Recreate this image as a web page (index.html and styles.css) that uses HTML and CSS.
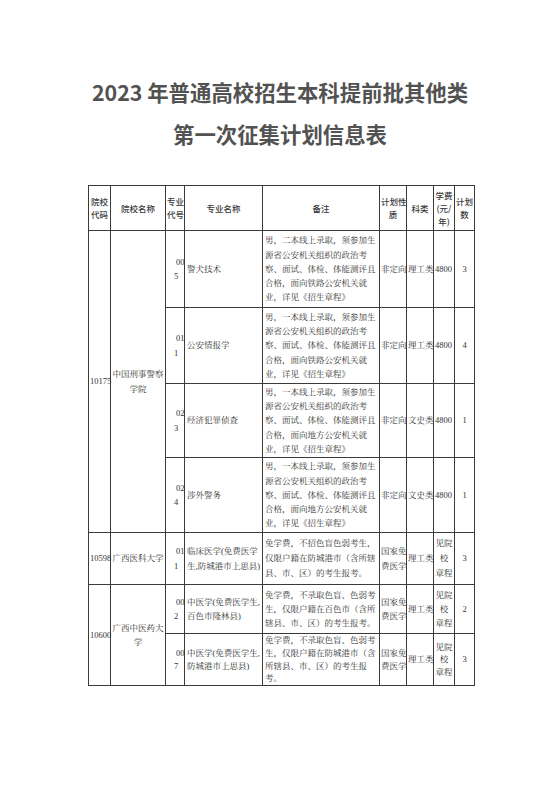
FILE: index.html
```html
<!DOCTYPE html>
<html lang="zh-CN">
<head>
<meta charset="utf-8">
<link rel="stylesheet" href="styles.css">
</head>
<body>
<div class="page">
  <h1 class="title"><span class="tl">2023 年普通高校招生本科提前批其他类</span><span class="tl">第一次征集计划信息表</span></h1>
  <table class="plan">
    <colgroup>
      <col class="w1"><col class="w2"><col class="w3"><col class="w4"><col class="w5"><col class="w6"><col class="w7"><col class="w8"><col class="w9">
    </colgroup>
    <thead>
      <tr class="hd">
        <th>院校<br>代码</th>
        <th>院校名称</th>
        <th>专业<br>代号</th>
        <th>专业名称</th>
        <th>备注</th>
        <th>计划性<br>质</th>
        <th>科类</th>
        <th>学费<br>(元/<br>年)</th>
        <th>计划<br>数</th>
      </tr>
    </thead>
    <tbody>
      <tr class="r1">
        <td rowspan="4" class="code">10175</td>
        <td rowspan="4" class="uni">中国刑事警察<br>学院</td>
        <td class="mc"><span class="l1">00</span><br>5</td>
        <td class="mn">警犬技术</td>
        <td class="rm">男，二本线上录取，须参加生<br>源省公安机关组织的政治考<br>察、面试、体检、体能测评且<br>合格，面向铁路公安机关就<br>业，详见《招生章程》</td>
        <td class="ctr">非定向</td>
        <td class="ctr">理工类</td>
        <td class="fee">4800</td>
        <td class="ctr">3</td>
      </tr>
      <tr class="r2">
        <td class="mc"><span class="l1">01</span><br>1</td>
        <td class="mn">公安情报学</td>
        <td class="rm">男，一本线上录取，须参加生<br>源省公安机关组织的政治考<br>察、面试、体检、体能测评且<br>合格，面向铁路公安机关就<br>业，详见《招生章程》</td>
        <td class="ctr">非定向</td>
        <td class="ctr">理工类</td>
        <td class="fee">4800</td>
        <td class="ctr">4</td>
      </tr>
      <tr class="r3">
        <td class="mc"><span class="l1">02</span><br>3</td>
        <td class="mn">经济犯罪侦查</td>
        <td class="rm">男，一本线上录取，须参加生<br>源省公安机关组织的政治考<br>察、面试、体检、体能测评且<br>合格，面向地方公安机关就<br>业，详见《招生章程》</td>
        <td class="ctr">非定向</td>
        <td class="ctr">文史类</td>
        <td class="fee">4800</td>
        <td class="ctr">1</td>
      </tr>
      <tr class="r4">
        <td class="mc"><span class="l1">02</span><br>4</td>
        <td class="mn">涉外警务</td>
        <td class="rm">男，一本线上录取，须参加生<br>源省公安机关组织的政治考<br>察、面试、体检、体能测评且<br>合格，面向地方公安机关就<br>业，详见《招生章程》</td>
        <td class="ctr">非定向</td>
        <td class="ctr">文史类</td>
        <td class="fee">4800</td>
        <td class="ctr">1</td>
      </tr>
      <tr class="r5">
        <td class="code">10598</td>
        <td class="uni">广西医科大学</td>
        <td class="mc"><span class="l1">01</span><br>1</td>
        <td class="mn">临床医学(免费医学<br>生,防城港市上思县)</td>
        <td class="rm">免学费，不招色盲色弱考生，<br>仅限户籍在防城港市（含所辖<br>县、市、区）的考生报考。</td>
        <td class="ctr">国家免<br>费医学</td>
        <td class="ctr">理工类</td>
        <td class="ctr">见院<br>校<br>章程</td>
        <td class="ctr">3</td>
      </tr>
      <tr class="r6">
        <td rowspan="2" class="code">10600</td>
        <td rowspan="2" class="uni">广西中医药大<br>学</td>
        <td class="mc"><span class="l1">00</span><br>2</td>
        <td class="mn">中医学(免费医学生,<br>百色市隆林县)</td>
        <td class="rm">免学费，不录取色盲、色弱考<br>生，仅限户籍在百色市（含所<br>辖县、市、区）的考生报考。</td>
        <td class="ctr">国家免<br>费医学</td>
        <td class="ctr">理工类</td>
        <td class="ctr">见院<br>校<br>章程</td>
        <td class="ctr">2</td>
      </tr>
      <tr class="r7">
        <td class="mc"><span class="l1">00</span><br>7</td>
        <td class="mn">中医学(免费医学生,<br>防城港市上思县)</td>
        <td class="rm">免学费，不录取色盲、色弱考<br>生，仅限户籍在防城港市（含<br>所辖县、市、区）的考生报<br>考。</td>
        <td class="ctr">国家免<br>费医学</td>
        <td class="ctr">理工类</td>
        <td class="ctr">见院<br>校<br>章程</td>
        <td class="ctr">3</td>
      </tr>
    </tbody>
  </table>
</div>
</body>
</html>
```

FILE: styles.css
```css
html, body {
  margin: 0;
  padding: 0;
  background: #ffffff;
}

.page {
  width: 560px;
  padding-top: 71px;
}

.title {
  margin: 0;
  font-family: "Noto Sans CJK SC", "Noto Sans", sans-serif;
  font-weight: 700;
  font-size: 21.4px;
  line-height: 42px;
  color: #525252;
  text-align: center;
}

.tl {
  display: block;
}

.plan {
  margin: 30px 0 0 88px;
  border-collapse: collapse;
  table-layout: fixed;
  width: 386px;
  color: #333333;
  font-family: "Liberation Serif", "Noto Serif CJK SC", "Noto Sans CJK SC", serif;
  font-size: 8.5px;
}

.w1 { width: 22px; }
.w2 { width: 55px; }
.w3 { width: 19px; }
.w4 { width: 78px; }
.w5 { width: 117px; }
.w6 { width: 27px; }
.w7 { width: 27px; }
.w8 { width: 21px; }
.w9 { width: 20px; }

.plan th,
.plan td {
  border: 1px solid #3a3a3a;
  padding: 0 1px;
  white-space: nowrap;
  overflow: visible;
  vertical-align: middle;
}

.plan th {
  font-family: "Noto Sans CJK SC", "Noto Sans", sans-serif;
  font-weight: 500;
  font-size: 8.5px;
  line-height: 13px;
  text-align: center;
  color: #3a3a3a;
}

.hd { height: 45px; }

.plan td { line-height: 14.3px; }

.r1 { height: 77px; }
.r2 { height: 76px; }
.r3 { height: 74px; }
.r4 { height: 75px; }
.r5 { height: 52px; }
.r6 { height: 49px; }
.r7 { height: 52px; }

.r5 td { line-height: 15px; }
.r6 td { line-height: 14px; }
.r7 td { line-height: 12.6px; }

.code {
  text-align: left;
  padding-left: 1px;
}

.uni {
  text-align: center;
}

.plan td.mc {
  text-align: left;
  padding-left: 8px;
}

.l1 {
  padding-left: 2px;
}

.plan td.mn,
.plan td.rm {
  text-align: left;
  padding-left: 2px;
}

.ctr {
  text-align: center;
}

.fee {
  text-align: left;
}
```
